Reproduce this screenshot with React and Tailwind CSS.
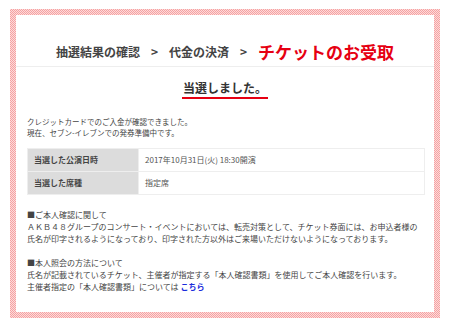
export default function App() {
  const rows = [
    { label: '当選した公演日時', value: '2017年10月31日(火) 18:30開演' },
    { label: '当選した席種', value: '指定席' },
  ];

  return (
    <div className="w-[450px] h-[327px] bg-white pl-[10px] pt-[9px] font-['Noto_Sans_CJK_JP',sans-serif] text-[#444]">
      <div className="w-[430px] h-[309px] p-[6px] bg-[repeating-conic-gradient(#f5a2a2_0%_25%,#fddada_0%_50%)] bg-[length:2px_2px]">
        <div className="w-full h-full bg-white">
          {/* steps */}
          <div className="h-[52px] pt-[22px] border-b border-[#eeeeee] flex items-center justify-center gap-[11px] font-bold whitespace-nowrap">
            <span className="text-[12px] leading-[18px] text-[#444]">抽選結果の確認</span>
            <span className="text-[12px] leading-[18px] text-[#444]">&gt;</span>
            <span className="text-[12px] leading-[18px] text-[#444]">代金の決済</span>
            <span className="text-[12px] leading-[18px] text-[#444]">&gt;</span>
            <span className="text-[17px] leading-[18px] text-[#e60012]">チケットのお受取</span>
          </div>

          <div className="px-[11px]">
            <div className="flex justify-center mt-[14px]">
              <h2 className="text-[12px] leading-[14px] font-bold text-[#333] pb-[2px] border-b-2 border-[#e60012] px-px">
                当選しました。
              </h2>
            </div>

            <p className="mt-[17px] text-[7.5px] leading-[11px] whitespace-nowrap">
              クレジットカードでのご入金が確認できました。
              <br />
              現在、セブン-イレブンでの発券準備中です。
            </p>

            <table className="mt-[10px] w-[398px] border-collapse text-[8px]">
              <tbody>
                {rows.map((r) => (
                  <tr key={r.label} className="h-[23px]">
                    <th className="w-[111px] bg-[#dcdcdc] border border-[#eeeeee] text-left font-bold pl-[6px] text-[#444]">
                      {r.label}
                    </th>
                    <td className="border border-[#eeeeee] pl-[6px] text-[#555]">{r.value}</td>
                  </tr>
                ))}
              </tbody>
            </table>

            <div className="mt-[14px] text-[8px] leading-[12px] whitespace-nowrap">
              <p>
                ■ご本人確認に関して
                <br />
                ＡＫＢ４８グループのコンサート・イベントにおいては、転売対策として、チケット券面には、お申込者様の
                <br />
                氏名が印字されるようになっており、印字された方以外はご来場いただけないようになっております。
              </p>
              <p className="mt-[12px]">
                ■本人照会の方法について
                <br />
                氏名が記載されているチケット、主催者が指定する「本人確認書類」を使用してご本人確認を行います。
                <br />
                主催者指定の「本人確認書類」については <a className="text-[#1a2bdc] font-bold">こちら</a>
              </p>
            </div>
          </div>
        </div>
      </div>
    </div>
  );
}
